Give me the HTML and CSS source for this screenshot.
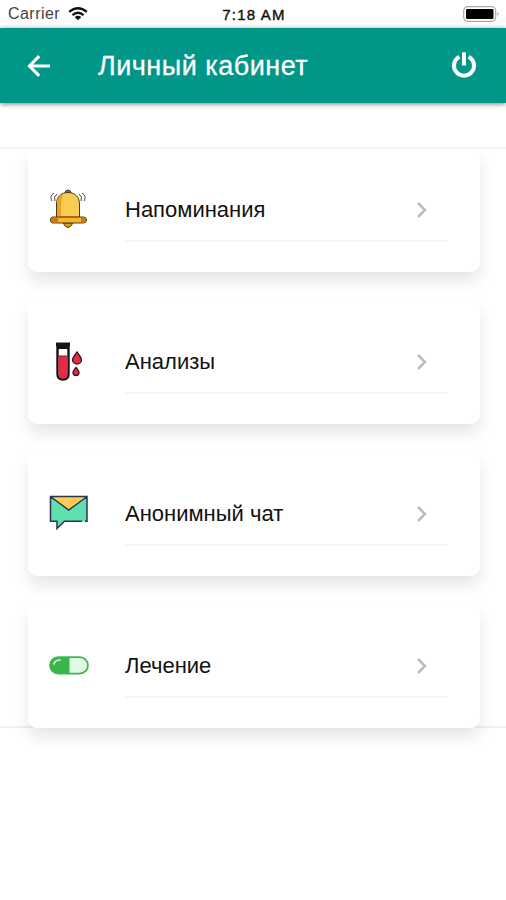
FILE: index.html
```html
<!DOCTYPE html>
<html lang="ru">
<head>
<meta charset="utf-8">
<title>Личный кабинет</title>
<link rel="stylesheet" href="styles.css">
</head>
<body>
<div class="status">
  <div class="carrier"><span>Carrier</span>
    <svg width="20" height="14" viewBox="0 0 20 14" fill="none" stroke="#111" stroke-width="2.3"><path d="M1.2 4.9Q10-2.5 18.8 4.9M4.4 8.2Q10 3.4 15.6 8.2"/><path d="M6.7 10Q10 7.500 13.300 10L10 13.300Z" fill="#111" stroke="none"/></svg>
  </div>
  <span class="time">7:18 AM</span>
  <svg class="battery" width="37" height="16" viewBox="0 0 37 16"><rect x=".7" y=".7" width="32" height="14.600" rx="4" fill="#fff" stroke="#aaa" stroke-width="1.200"/><rect x="3" y="3" width="27.500" height="10" rx="1" fill="#000"/><path d="M34.500 6q2 2 0 4z" fill="#999"/></svg>
</div>
<header class="bar">
  <svg class="back" width="24" height="22" viewBox="0 0 24 22" fill="none" stroke="#fff" stroke-width="3.1"><path d="M12.200 1.200L2.500 11l9.700 9.800M2.500 11H23"/></svg>
  <h1>Личный кабинет</h1>
  <svg class="power" width="26" height="27" viewBox="0 0 26 27" fill="none" stroke="#fff" stroke-width="4"><path d="M8.300 4.800A10 10 0 1 0 17.700 4.800"/><path d="M13 .3V13.500"/></svg>
</header>
<main class="list">
  <section class="card">
    <svg class="icon" viewBox="0 0 40 40"><g stroke="#4b3a22" stroke-width="1"><path d="M14 34q5 9 10 0z" fill="#e79a16"/><path d="M16 4q0-3 3-3t3 3z" fill="#a76a17"/><path d="M7.500 29V15C7.500 8 12 3.500 19 3.500S30.500 8 30.500 15v14z" fill="#f8cb52"/><path d="M3.500 28h31q3 0 3 3t-3 3h-31Q1.500 34 1.500 31t2-3z" fill="#f4b42c"/></g><path d="M8 28V15q0-7 6-10-2 5-2 11v12z" fill="#eba122"/><path d="M2 29h7v4.500H2zM32 29h5v4.500h-5z" fill="#c97b13"/><path d="M8 27.700h22" stroke="#a96711" stroke-width="1.300"/><path d="M5 4q-5 3-2 8M8 5q-4 3-2 7M33 4q5 3 2 8M30 5q4 3 2 7" fill="none" stroke="#444" stroke-width="1"/></svg>
    <div class="row"><span>Напоминания</span><svg class="chev" viewBox="0 0 12 18"><path d="M2 2l7 7-7 7"/></svg></div>
  </section>
  <section class="card">
    <svg class="icon" viewBox="0 0 40 40"><path d="M8.500 5h11v28q0 5.500-5.500 5.500T8.500 33z" fill="#fff" stroke="#17131a" stroke-width="2.400"/><path d="M9.500 15h9v18q0 4.500-4.500 4.500T9.500 33z" fill="#e42b43"/><path d="M9.500 15h9" stroke="#5c2831"/><path d="M7 1.500h14v4H7z" fill="#17131a"/><path d="M8 7h12" stroke="#17131a" stroke-width="2"/><path d="M28 11q-4.500 6-4.500 8a4.500 4 0 0 0 9 0q0-2-4.500-8zM27 26.500q-3 3.500-3 5a3 3 0 0 0 6 0q0-1.500-3-5z" fill="#e42b43" stroke="#3a1720" stroke-width="1.300"/></svg>
    <div class="row"><span>Анализы</span><svg class="chev" viewBox="0 0 12 18"><path d="M2 2l7 7-7 7"/></svg></div>
  </section>
  <section class="card">
    <svg class="icon" viewBox="0 0 40 40"><path d="M1.500 3.500h36.500v25H15.500l-7.500 7v-7H1.500z" fill="#5fe0ae"/><path d="M2 3.500h35.500L19.700 17z" fill="#ffcb52"/><path d="M33 28.300H15.500L8 35.500v-7.200H1.500V3.500H38v24.800h-2M2 4l17.700 13L37.500 4" fill="none" stroke="#283652" stroke-width="1.500"/></svg>
    <div class="row"><span>Анонимный чат</span><svg class="chev" viewBox="0 0 12 18"><path d="M2 2l7 7-7 7"/></svg></div>
  </section>
  <section class="card">
    <svg class="icon" viewBox="0 0 40 40"><rect x="1" y="12.200" width="38" height="16.400" rx="8.200" fill="#ddfbe5"/><path d="M20.500 12.200H9.200a8.200 8.200 0 0 0 0 16.400h11.300z" fill="#36b64b"/><rect x="1" y="12.200" width="38" height="16.400" rx="8.200" fill="none" stroke="#40b653" stroke-width="1.700"/><path d="M5 19q1-4 6-4" fill="none" stroke="#d9f7df" stroke-width="1.700" stroke-linecap="round"/></svg>
    <div class="row"><span>Лечение</span><svg class="chev" viewBox="0 0 12 18"><path d="M2 2l7 7-7 7"/></svg></div>
  </section>
</main>
</body>
</html>
```
FILE: styles.css
```css
* { box-sizing: border-box; }
body { margin: 0; width: 506px; height: 900px; background: #fff; font-family: "Liberation Sans", Arial, sans-serif; overflow: hidden; }
.status { height: 28px; display: grid; grid-template-columns: 1fr auto 1fr; align-items: center; padding: 0 6px 0 8px; font-size: 16px; color: #333; }
.carrier { display: flex; align-items: center; gap: 8px; letter-spacing: .45px; color: #444; }
.time { font-size: 15px; letter-spacing: 1.2px; color: #111; -webkit-text-stroke: .4px #111; }
.battery { justify-self: end; }
.bar { height: 75px; background: #009688; display: flex; align-items: center; padding: 0 29px 0 27px; color: #fff; box-shadow: 0 1px 5px rgba(0,0,0,.5); }
.bar h1 { margin: 0 auto 0 47px; font-size: 27px; line-height: 32px; font-weight: 400; letter-spacing: .5px; white-space: nowrap; -webkit-text-stroke: .3px #fff; }
.list { margin-top: 44px; height: 581px; display: flex; flex-direction: column; gap: 29px; padding: 0 26px 0 28px; border-top: 2px solid #f6f6f6; border-bottom: 2px solid #f0f0f0; }
.card { flex: 0 0 123px; background: #fff; border-radius: 9px; box-shadow: 0 9px 16px rgba(0,0,0,.1); display: flex; padding: 31px 32px 0 21px; }
.list .card:first-child { clip-path: inset(0 -30px -30px -30px); }
.icon { width: 40px; height: 40px; margin: 9px 36px 0 0; flex: none; }
.row { flex: 1; height: 62px; display: flex; align-items: center; justify-content: space-between; border-bottom: 2px solid #f5f5f5; padding-right: 20px; font-size: 22px; color: #111; white-space: nowrap; }
.chev { width: 12px; height: 18px; fill: none; stroke: #bdbdbd; stroke-width: 2.6; }
```
